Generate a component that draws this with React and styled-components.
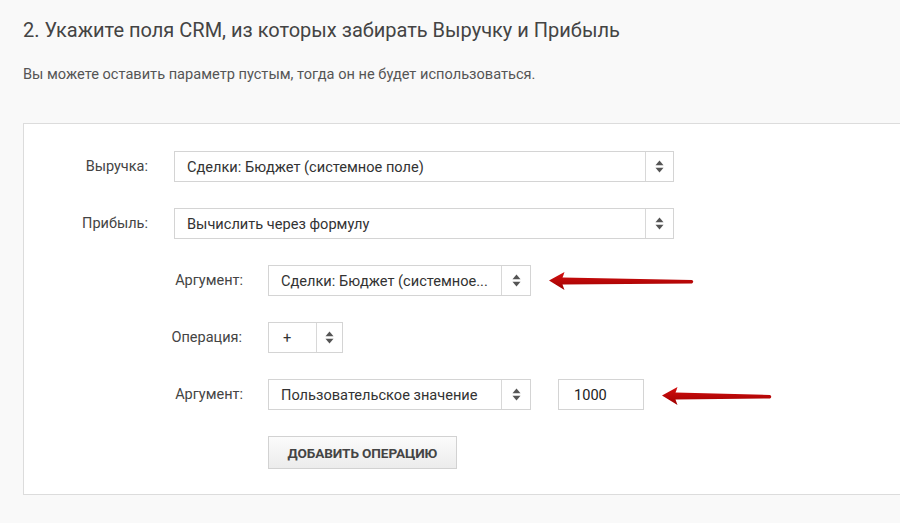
import React from "react";
import styled, { createGlobalStyle } from "styled-components";

const Global = createGlobalStyle`
  html, body { margin: 0; padding: 0; background: #f9f9f9; overflow-x: hidden; }
  body { font-family: Roboto, "Liberation Sans", Arial, sans-serif; color: #444; }
`;

const Page = styled.div`
  padding: 15px 0 0 23px;
  min-height: 523px;
  box-sizing: border-box;
`;

const Title = styled.h2`
  margin: 0;
  font-size: 20px;
  line-height: 30px;
  font-weight: 400;
  color: #444;
`;

const Hint = styled.p`
  margin: 19px 0 0;
  font-size: 14.6px;
  line-height: 20px;
  color: #555;
`;

const Panel = styled.div`
  margin-top: 39px;
  width: 900px;
  background: #fff;
  border: 1px solid #dcdcdc;
  padding: 27px 0 25px 0;
  display: flex;
  flex-direction: column;
  gap: 26px;
`;

const Row = styled.div`
  display: flex;
  align-items: center;
  height: ${(p) => p.$h || 31}px;
`;

const Label = styled.div`
  box-sizing: border-box;
  width: ${(p) => p.$w}px;
  text-align: right;
  padding-right: ${(p) => p.$pad || 26}px;
  font-size: 14.5px;
  color: #444;
  flex-shrink: 0;
`;

const Spacer = styled.div`
  width: ${(p) => p.$w}px;
  flex-shrink: 0;
`;

const SelectBox = styled.div`
  width: ${(p) => p.$w}px;
  height: 31px;
  box-sizing: border-box;
  border: 1px solid #d4d4d4;
  background: #fff;
  display: flex;
  flex-shrink: 0;
`;

const SelectValue = styled.div`
  flex: 1;
  display: flex;
  align-items: center;
  padding-left: ${(p) => p.$pad || 12}px;
  font-size: 14.6px;
  color: #333;
  white-space: nowrap;
  overflow: hidden;
`;

const SelectArrow = styled.div`
  width: ${(p) => p.$w || 27}px;
  border-left: 1px solid #d8d8d8;
  display: flex;
  align-items: center;
  justify-content: center;
`;

const Input = styled.div`
  width: 86px;
  height: 31px;
  box-sizing: border-box;
  border: 1px solid #d4d4d4;
  background: #fff;
  display: flex;
  align-items: center;
  padding-left: 15px;
  font-size: 14.6px;
  color: #222;
  margin-left: 27px;
  flex-shrink: 0;
`;

const Button = styled.button`
  width: 189px;
  height: 33px;
  box-sizing: border-box;
  border: 1px solid #d2d2d2;
  background: linear-gradient(#fbfbfb, #ececec);
  font-family: inherit;
  font-size: 13.6px;
  font-weight: 700;
  color: #444;
  text-transform: uppercase;
  letter-spacing: -0.1px;
  padding: 0;
  flex-shrink: 0;
`;

const ArrowWrap = styled.div`
  margin-left: 17px;
  display: flex;
  align-items: center;
  margin-top: ${(p) => p.$dy || 0}px;
`;

const SortIcon = () => (
  <svg width="9" height="13" viewBox="0 0 9 13">
    <path d="M4.5 0.5 L8.5 5.2 L0.5 5.2 Z" fill="#555" />
    <path d="M0.5 7.8 L8.5 7.8 L4.5 12.5 Z" fill="#555" />
  </svg>
);

const RedArrow = ({ length }) => {
  const L = length;
  return (
    <svg width={L + 2} height="20" viewBox={`0 0 ${L + 2} 20`}>
      <defs>
        <linearGradient id={`g${L}`} x1="0" y1="0" x2="0" y2="1">
          <stop offset="0" stopColor="#d41010" />
          <stop offset="1" stopColor="#9e0000" />
        </linearGradient>
      </defs>
      <path
        d={`M1 9.5 L16.5 1 Q15 5.5 14.5 6.5 L${L - 1} 9 Q${L + 1.5} 10.7 ${L - 1} 12.5 L14.5 13.5 Q15 15 16.5 19 Z`}
        fill={`url(#g${L})`}
      />
    </svg>
  );
};

const Select = ({ w, value, arrowW, pad }) => (
  <SelectBox $w={w}>
    <SelectValue $pad={pad}>{value}</SelectValue>
    <SelectArrow $w={arrowW}>
      <SortIcon />
    </SelectArrow>
  </SelectBox>
);

export default function App() {
  return (
    <>
      <Global />
      <Page>
        <Title>2. Укажите поля CRM, из которых забирать Выручку и Прибыль</Title>
        <Hint>Вы можете оставить параметр пустым, тогда он не будет использоваться.</Hint>
        <Panel>
          <Row>
            <Label $w={150}>Выручка:</Label>
            <Select w={500} value="Сделки: Бюджет (системное поле)" />
          </Row>
          <Row>
            <Label $w={150}>Прибыль:</Label>
            <Select w={500} value="Вычислить через формулу" />
          </Row>
          <Row>
            <Label $w={244} $pad={25}>Аргумент:</Label>
            <Select w={263} arrowW={28} value="Сделки: Бюджет (системное..." />
            <ArrowWrap>
              <RedArrow length={145} />
            </ArrowWrap>
          </Row>
          <Row>
            <Label $w={244} $pad={26}>Операция:</Label>
            <Select w={75} arrowW={25} value="+" pad={14} />
          </Row>
          <Row>
            <Label $w={244} $pad={25}>Аргумент:</Label>
            <Select w={263} arrowW={28} value="Пользовательское значение" />
            <Input>1000</Input>
            <ArrowWrap $dy={2}>
              <RedArrow length={110} />
            </ArrowWrap>
          </Row>
          <Row $h={33}>
            <Spacer $w={244} />
            <Button>Добавить операцию</Button>
          </Row>
        </Panel>
      </Page>
    </>
  );
}
